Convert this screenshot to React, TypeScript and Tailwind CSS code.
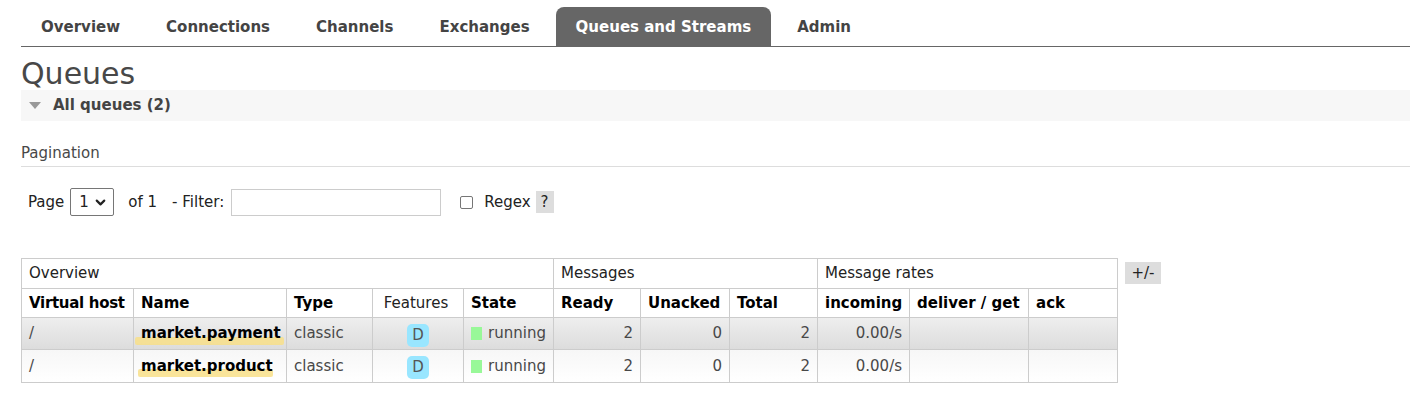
import React from 'react';
import { ChevronDown } from 'lucide-react';

const tabs = ['Overview', 'Connections', 'Channels', 'Exchanges', 'Queues and Streams', 'Admin'];

const queues = [
  { vhost: '/', name: 'market.payment', type: 'classic', ready: 2, unacked: 0, total: 2, incoming: '0.00/s', mark: 'left-[1px] w-[149px] bottom-[4px]', alt: 'from-[#eeeeee] to-[#dcdcdc]' },
  { vhost: '/', name: 'market.product', type: 'classic', ready: 2, unacked: 0, total: 2, incoming: '0.00/s', mark: 'left-[4px] w-[135px] bottom-[5px]', alt: 'from-[#f7f7f7] to-[#ffffff]' },
];

const App = () => {
  return (
    <div className="min-h-screen bg-white text-[15px] text-[#484848]" style={{ fontFamily: '"DejaVu Sans", Verdana, sans-serif' }}>
      {/* Menu */}
      <div className="pl-[21px] pt-[7px]">
        <ul className="flex gap-[6px] border-b border-[#666]">
          {tabs.map(t => (
            <li
              key={t}
              className={`h-[39px] px-[20px] pt-[2px] flex items-center font-bold ${
                t === 'Queues and Streams' ? 'bg-[#666] text-white rounded-t-[8px]' : 'text-[#444]'
              }`}
            >
              {t}
            </li>
          ))}
        </ul>
      </div>

      <div className="pl-[21px]">
        <h1 className="mt-[11px] h-[32px] leading-[32px] text-[30px] font-normal text-[#484848]">Queues</h1>

        <div className="h-[31px] bg-[#f7f7f7] flex items-center">
          <svg width="12" height="8" viewBox="0 0 12 8" className="ml-[8px] mt-[1px]">
            <polygon points="0,0 12,0 6,7" fill="#999" />
          </svg>
          <span className="ml-[12px] font-bold text-[#444]">All queues (2)</span>
        </div>

        {/* Pagination */}
        <div className="mt-[23px] pb-[4px] leading-[18px] border-b border-[#ddd]">Pagination</div>

        <div className="mt-[21px] flex items-center pl-[7px] text-[#222]">
          <span>Page</span>
          <div className="ml-[6px] w-[44px] h-[28px] border border-[#767676] rounded-[2px] flex items-center justify-between pl-[8px] pr-[5px]">
            <span>1</span>
            <ChevronDown size={15} strokeWidth={3.5} className="text-[#222]" />
          </div>
          <span className="ml-[14px]">of 1</span>
          <span className="ml-[15px]">- Filter:</span>
          <div className="ml-[7px] w-[210px] h-[27px] border border-[#ccc] bg-white" />
          <div className="ml-[19px] w-[13px] h-[13px] border border-[#767676] rounded-[2px] bg-white" />
          <span className="ml-[11px]">Regex</span>
          <span className="ml-[5px] w-[18px] h-[22px] bg-[#ddd] flex items-center justify-center">?</span>
        </div>

        {/* Queue table */}
        <div className="mt-[42px] flex items-start gap-[7px]">
          <table className="border-collapse table-fixed w-[1096px] text-left whitespace-nowrap">
            <colgroup>
              <col className="w-[112px]" />
              <col className="w-[153px]" />
              <col className="w-[86px]" />
              <col className="w-[91px]" />
              <col className="w-[90px]" />
              <col className="w-[87px]" />
              <col className="w-[89px]" />
              <col className="w-[88px]" />
              <col className="w-[92px]" />
              <col className="w-[119px]" />
              <col className="w-[89px]" />
            </colgroup>
            <thead>
              <tr className="h-[30px] text-[#222]">
                <th colSpan={5} className="border border-[#ccc] px-[7px] font-normal">Overview</th>
                <th colSpan={3} className="border border-[#ccc] px-[7px] font-normal">Messages</th>
                <th colSpan={3} className="border border-[#ccc] px-[7px] font-normal">Message rates</th>
              </tr>
              <tr className="h-[29px] text-black">
                <th className="border border-[#ccc] pl-[7px] pr-0 font-bold tracking-[-0.3px]">Virtual host</th>
                <th className="border border-[#ccc] px-[7px] font-bold">Name</th>
                <th className="border border-[#ccc] px-[7px] font-bold">Type</th>
                <th className="border border-[#ccc] pl-[5px] pr-[9px] font-normal text-center text-[#222]">Features</th>
                <th className="border border-[#ccc] px-[7px] font-bold">State</th>
                <th className="border border-[#ccc] px-[7px] font-bold">Ready</th>
                <th className="border border-[#ccc] px-[7px] font-bold">Unacked</th>
                <th className="border border-[#ccc] px-[7px] font-bold">Total</th>
                <th className="border border-[#ccc] px-[7px] font-bold">incoming</th>
                <th className="border border-[#ccc] px-[7px] font-bold">deliver / get</th>
                <th className="border border-[#ccc] px-[7px] font-bold">ack</th>
              </tr>
            </thead>
            <tbody>
              {queues.map((q, i) => (
                <tr key={q.name} className={`${i === 0 ? 'h-[32px]' : 'h-[33px]'} bg-linear-to-b ${q.alt}`}>
                  <td className="border border-[#ccc] px-[7px]">{q.vhost}</td>
                  <td className="border border-[#ccc] px-[7px] relative">
                    <span className={`absolute h-[8px] rounded-[2px] bg-[#f8df88] opacity-85 ${q.mark}`} />
                    <span className="relative font-bold text-black">{q.name}</span>
                  </td>
                  <td className="border border-[#ccc] px-[7px]">{q.type}</td>
                  <td className="border border-[#ccc] px-[7px] text-center">
                    <span className="inline-flex w-[22px] h-[23px] mt-[3px] items-center justify-center rounded-[5px] bg-[#99e6ff] text-[#555]">D</span>
                  </td>
                  <td className="border border-[#ccc] px-[7px]">
                    <div className="flex items-center">
                      <span className="w-[13px] h-[13px] bg-[#98f898]" />
                      <span className="ml-[6px]">running</span>
                    </div>
                  </td>
                  <td className="border border-[#ccc] px-[7px] text-right">{q.ready}</td>
                  <td className="border border-[#ccc] px-[7px] text-right">{q.unacked}</td>
                  <td className="border border-[#ccc] px-[7px] text-right">{q.total}</td>
                  <td className="border border-[#ccc] px-[7px] text-right">{q.incoming}</td>
                  <td className="border border-[#ccc] px-[7px]"></td>
                  <td className="border border-[#ccc] px-[7px]"></td>
                </tr>
              ))}
            </tbody>
          </table>
          <span className="mt-[4px] w-[36px] h-[22px] bg-[#ddd] flex items-center justify-center text-[#222]">+/-</span>
        </div>
      </div>
    </div>
  );
};

export default App;
